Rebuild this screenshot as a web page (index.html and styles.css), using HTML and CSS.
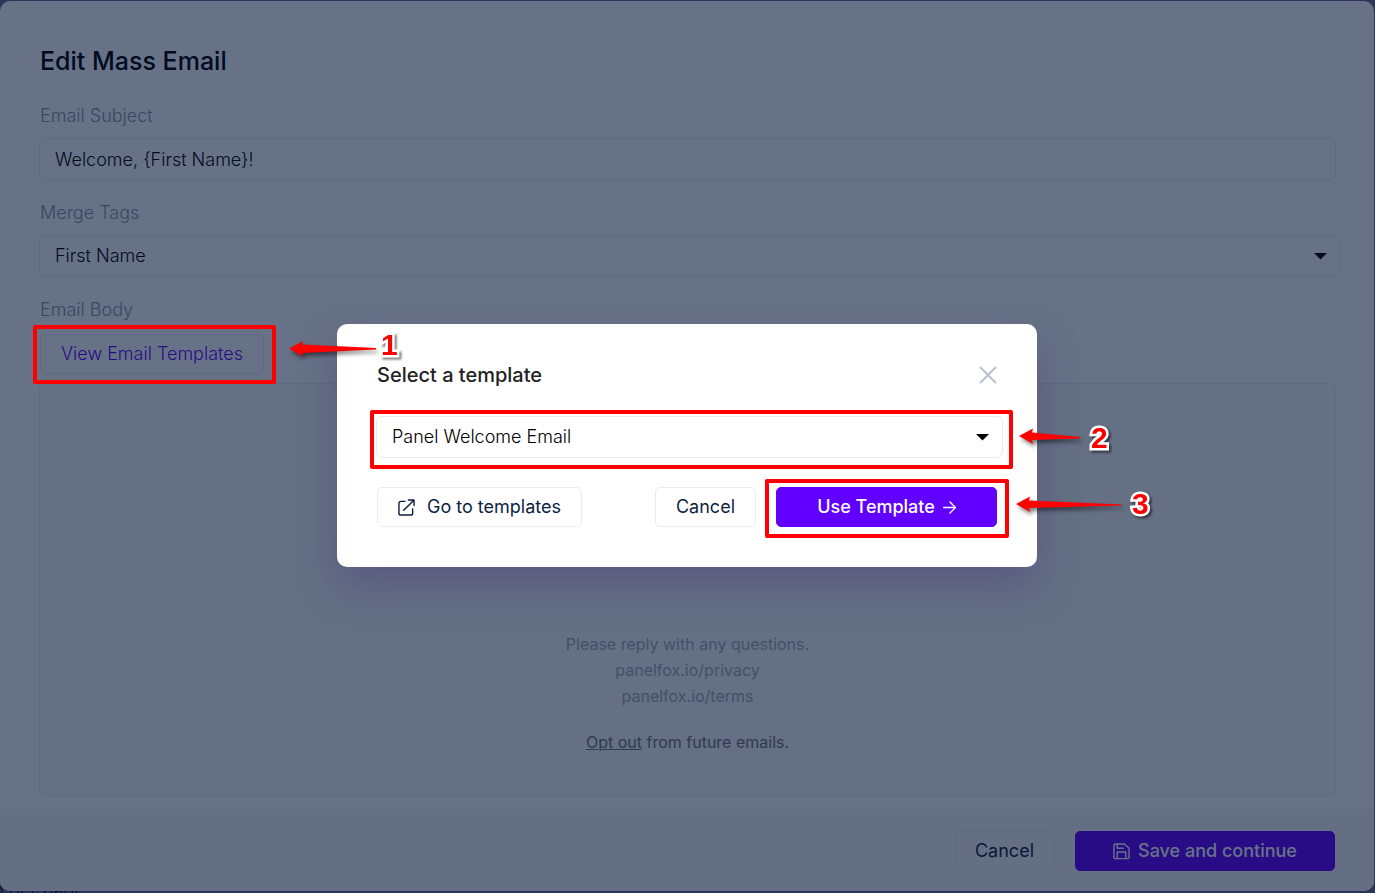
FILE: index.html
```html
<!DOCTYPE html>
<html lang="en">
<head>
<meta charset="utf-8">
<meta name="viewport" content="width=device-width, initial-scale=1">
<title>Edit Mass Email</title>
<link rel="stylesheet" href="styles.css">
</head>
<body>
<div class="page">
  <div class="page-behind">o per page</div>
  <main class="panel">
    <form class="editor">
      <h1 class="editor-title">Edit Mass Email</h1>
      <div class="field">
        <label class="label" for="subject">Email Subject</label>
        <input class="control" id="subject" type="text" value="Welcome, {First Name}!">
      </div>
      <div class="field">
        <label class="label" for="merge">Merge Tags</label>
        <div class="select-box select-box-wide">
          <select class="control" id="merge"><option>First Name</option></select>
          <svg class="caret" viewBox="0 0 13 7" aria-hidden="true"><path d="M0 0h13L6.500 6.500z"/></svg>
        </div>
      </div>
      <div class="field field-body">
        <span class="label">Email Body</span>
        <div class="marked marked-view">
          <button class="btn btn-link" type="button">View Email Templates</button>
          <span class="frame frame-view"></span>
          <span class="callout callout-one">
            <svg class="arrow" width="90" height="20" viewBox="0 0 90 20" aria-hidden="true"><path d="M0 8.500 14 1 13 4.500 87 8V9.500L13 13 14 16.500z"/></svg>
            <span class="digit">1</span>
          </span>
        </div>
        <section class="preview">
          <p>Please reply with any questions.<br>panelfox.io/privacy<br>panelfox.io/terms</p>
          <p class="optout"><a href="#optout">Opt out</a> from future emails.</p>
        </section>
      </div>
    </form>
    <footer class="footer">
      <button class="btn btn-clear" type="button">Cancel</button>
      <button class="btn btn-primary btn-save" type="button">
        <svg class="icon-save" viewBox="0 0 18 18" aria-hidden="true"><path d="M3.500 1h8.500L17 5.500v9a2 2 0 0 1-2 2H3a2 2 0 0 1-2-2V3a2 2 0 0 1 2-2zM4.500 16.500V9.500h9v7M4.500 1v4.500h6.500"/></svg>
        Save and continue
      </button>
    </footer>
  </main>
  <div class="overlay">
    <div class="modal" role="dialog" aria-labelledby="modal-title">
      <header class="modal-head">
        <h2 class="modal-title" id="modal-title">Select a template</h2>
        <button class="close" type="button" aria-label="Close"><svg viewBox="0 0 18 18" aria-hidden="true"><path d="M1.500 1.500l15 15M16.500 1.500l-15 15"/></svg></button>
      </header>
      <div class="marked marked-select">
        <div class="select-box">
          <select class="control" aria-label="Template"><option>Panel Welcome Email</option></select>
          <svg class="caret" viewBox="0 0 13 7" aria-hidden="true"><path d="M0 0h13L6.500 6.500z"/></svg>
        </div>
        <span class="frame frame-select"></span>
        <span class="callout callout-two">
          <svg class="arrow" width="64" height="20" viewBox="0 0 64 20" aria-hidden="true"><path d="M0 8 14 0.500 13 4.500 61 9V10.500L13 12 14 16z"/></svg>
          <span class="digit">2</span>
        </span>
      </div>
      <div class="modal-actions">
        <a class="btn btn-go" href="#templates">
          <svg class="icon-out" viewBox="0 0 18 18" aria-hidden="true"><path d="M7.500 2.500H3a2 2 0 0 0-2 2V15a2 2 0 0 0 2 2h10.500a2 2 0 0 0 2-2v-4.500M6 12 16.500 1.500M11 1h6v6"/></svg>
          Go to templates
        </a>
        <button class="btn" type="button">Cancel</button>
        <div class="marked">
          <button class="btn btn-primary btn-use" type="button">
            Use Template
            <svg class="icon-arrow" viewBox="0 0 14 14" aria-hidden="true"><path d="M0.500 7h12.500M7.500 1l6 6-6 6"/></svg>
          </button>
          <span class="frame frame-use"></span>
          <span class="callout callout-three">
            <svg class="arrow" width="108" height="20" viewBox="0 0 108 20" aria-hidden="true"><path d="M0 10 14 2.500 13 6.500 106 10.500V11.500L13 14 14 18z"/></svg>
            <span class="digit">3</span>
          </span>
        </div>
      </div>
    </div>
  </div>
</div>
</body>
</html>
```
FILE: styles.css
```css
* { box-sizing: border-box; }

body {
  margin: 0;
  font-family: Inter, "Liberation Sans", sans-serif;
  font-size: 18px;
  line-height: 24px;
  color: #000;
}

h1, h2, p { margin: 0; font-weight: 500; }

button, input, select { font: inherit; color: inherit; }

.page {
  position: relative;
  display: flex;
  min-height: 100vh;
  padding: 1px 1px 2px 0;
  overflow: hidden;
  background: #646a90;
}

.page-behind {
  position: absolute;
  left: -7px;
  bottom: -9px;
  color: #1c2040;
}

.panel {
  position: relative;
  flex: 1;
  display: flex;
  flex-direction: column;
  border-radius: 10px;
  overflow: hidden;
  background: #fff;
}

.editor {
  flex: 1;
  display: flex;
  flex-direction: column;
  gap: 21px;
  padding: 44px 38px 14px 39px;
}

.editor-title {
  margin-bottom: 6px;
  padding-left: 1px;
  font-size: 25px;
  line-height: 32px;
}

.field {
  display: flex;
  flex-direction: column;
  gap: 10px;
  font-weight: 300;
}

.label { padding-left: 1px; color: #8c93a6; }

.control {
  appearance: none;
  display: block;
  width: 100%;
  height: 42px;
  padding: 0 15px;
  border: 1px solid #ebebee;
  border-radius: 6px;
  background: #fff;
  font-weight: 300;
}

.select-box { position: relative; }
.select-box-wide { margin-right: -5px; }

.caret {
  position: absolute;
  right: 14px;
  top: 18px;
  width: 13px;
  height: 7px;
  pointer-events: none;
}

.field-body { flex: 1; gap: 9px; }

.marked { position: relative; }
.marked-view { align-self: flex-start; margin: 3px 0 0 1px; }

.btn {
  display: inline-flex;
  align-items: center;
  justify-content: center;
  gap: 8px;
  height: 40px;
  padding: 0 20px;
  border: 1px solid #ebebf3;
  border-radius: 5px;
  background: #fff;
  color: #0d1f42;
  font-weight: 400;
  text-decoration: none;
  white-space: nowrap;
}

.btn-link { color: #6200ff; font-weight: 300; }
.btn-clear { background: transparent; }
.btn-primary { border-color: #6200ff; background: #6200ff; color: #fff; font-weight: 500; }

.preview {
  flex: 1;
  padding: 247px 20px 40px;
  border: 1px solid #ebebee;
  border-radius: 6px;
  background: #fafafa;
  color: #a9a9b2;
  font-size: 16px;
  line-height: 26px;
  text-align: center;
}

.preview p { font-weight: 400; }
.preview .optout { margin-top: 20px; color: #74757c; }
.preview a { color: inherit; }

.footer {
  display: flex;
  justify-content: flex-end;
  gap: 20px;
  padding: 20px 39px;
  border-top: 1px solid #f0f0f2;
  background: #f8f8f9;
}

.btn-save { width: 260px; }
.icon-save { width: 17px; height: 17px; }

.icon-save, .icon-out, .icon-arrow, .close svg {
  flex: none;
  fill: none;
  stroke: currentColor;
  stroke-width: 1.5;
  stroke-linecap: round;
  stroke-linejoin: round;
}

.overlay {
  position: absolute;
  inset: 0;
  z-index: 1;
  display: grid;
  place-items: center;
  padding: 0 1px 2px 0;
  background: rgba(2, 20, 53, 0.6);
}

.modal {
  width: 700px;
  max-width: 100%;
  padding: 40px;
  border-radius: 10px;
  background: #fff;
  box-shadow: 0 20px 40px rgba(70, 50, 120, 0.35);
}

.modal-head {
  display: flex;
  justify-content: space-between;
  align-items: center;
  height: 22px;
  margin-bottom: 30px;
}

.modal-title { font-size: 20px; color: #222; }

.close {
  display: flex;
  padding: 0;
  border: 0;
  background: none;
  color: #b9c0cf;
}

.close svg { width: 18px; height: 18px; stroke-width: 2; }

.marked-select { margin: 0 -6px 29px -1px; }

.modal-actions { display: flex; gap: 20px; }
.btn-go { gap: 12px; margin-right: auto; }
.icon-out { width: 17px; height: 17px; }
.icon-arrow { width: 13px; height: 13px; }
.btn-use { width: 221px; }

.frame {
  position: absolute;
  z-index: 2;
  border: 4px solid #f00;
  border-radius: 2px;
  pointer-events: none;
}

.frame-view { inset: -9px -12px -10px -7px; }
.frame-select { inset: -6px -10px -11px -6px; }
.frame-use { inset: -8px -12px -11px -11px; }

.callout {
  position: absolute;
  left: 100%;
  z-index: 2;
  display: flex;
  align-items: center;
  height: 20px;
  pointer-events: none;
}

.arrow { fill: #f00; filter: drop-shadow(2px 3px 2px rgba(0, 0, 0, 0.5)); }

.digit {
  color: #f00;
  font: bold 30px/30px "Liberation Sans", sans-serif;
  -webkit-text-stroke: 5px #fff;
  paint-order: stroke fill;
  filter: drop-shadow(2px 2px 1px rgba(0, 0, 0, 0.5));
}

.callout-one { top: 6px; margin-left: 25px; gap: 2px; align-items: flex-end; }
.callout-two { top: 12px; margin-left: 16px; gap: 8px; }
.callout-three { top: 7px; margin-left: 19px; gap: 8px; }
```
